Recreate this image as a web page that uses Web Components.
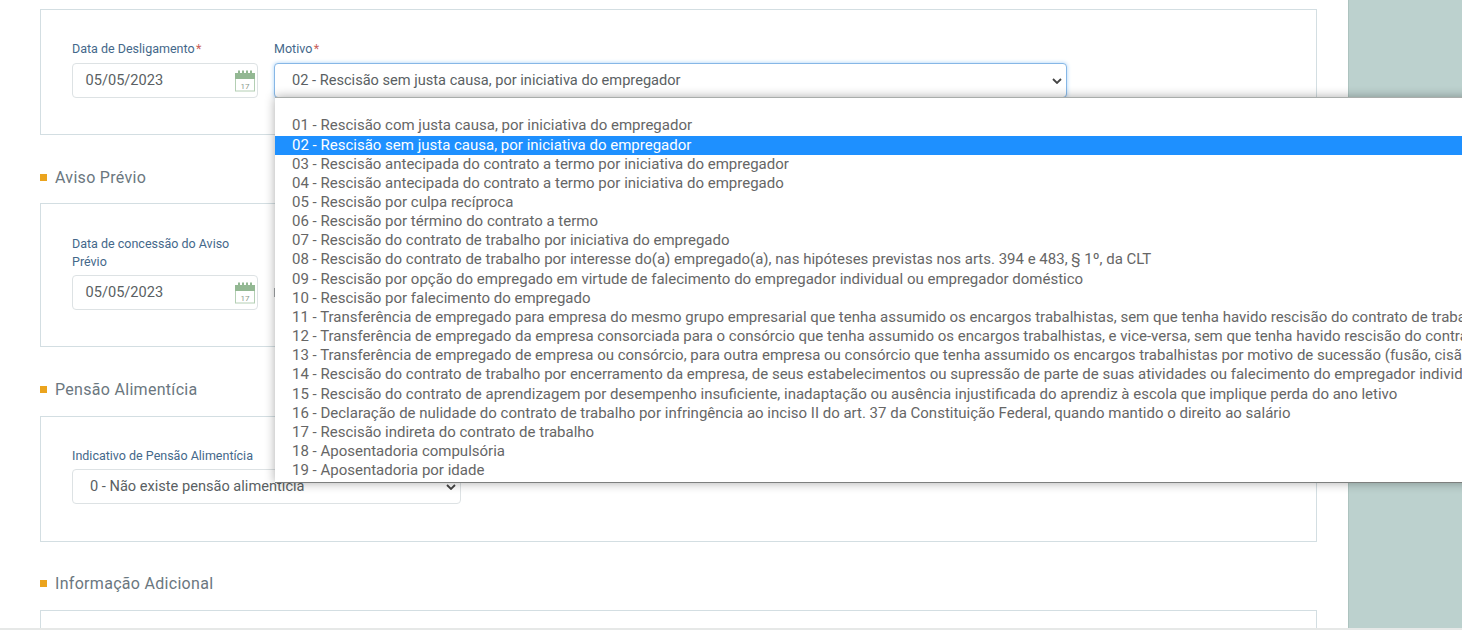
<!DOCTYPE html>
<html lang="pt-BR">
<head>
<meta charset="utf-8">
<title>Desligamento</title>
<style>
  html, body { margin: 0; height: 100%; background: #fff; font-family: Roboto, "Liberation Sans", sans-serif; }
</style>
</head>
<body>
<app-shell>
  <ui-panel>
    <ui-row>
      <ui-field label="Data de Desligamento" required width="186">
        <ui-date value="05/05/2023"></ui-date>
      </ui-field>
      <ui-field label="Motivo" required width="793">
        <ui-select value="02 - Rescisão sem justa causa, por iniciativa do empregador" focused>
          <ui-listbox slot="list">
            <ui-option>01 - Rescisão com justa causa, por iniciativa do empregador</ui-option>
            <ui-option selected>02 - Rescisão sem justa causa, por iniciativa do empregador</ui-option>
            <ui-option>03 - Rescisão antecipada do contrato a termo por iniciativa do empregador</ui-option>
            <ui-option>04 - Rescisão antecipada do contrato a termo por iniciativa do empregado</ui-option>
            <ui-option>05 - Rescisão por culpa recíproca</ui-option>
            <ui-option>06 - Rescisão por término do contrato a termo</ui-option>
            <ui-option>07 - Rescisão do contrato de trabalho por iniciativa do empregado</ui-option>
            <ui-option>08 - Rescisão do contrato de trabalho por interesse do(a) empregado(a), nas hipóteses previstas nos arts. 394 e 483, § 1º, da CLT</ui-option>
            <ui-option>09 - Rescisão por opção do empregado em virtude de falecimento do empregador individual ou empregador doméstico</ui-option>
            <ui-option>10 - Rescisão por falecimento do empregado</ui-option>
            <ui-option>11 - Transferência de empregado para empresa do mesmo grupo empresarial que tenha assumido os encargos trabalhistas, sem que tenha havido rescisão do contrato de trabalho</ui-option>
            <ui-option>12 - Transferência de empregado da empresa consorciada para o consórcio que tenha assumido os encargos trabalhistas, e vice-versa, sem que tenha havido rescisão do contrato de trabalho</ui-option>
            <ui-option>13 - Transferência de empregado de empresa ou consórcio, para outra empresa ou consórcio que tenha assumido os encargos trabalhistas por motivo de sucessão (fusão, cisão ou incorporação)</ui-option>
            <ui-option>14 - Rescisão do contrato de trabalho por encerramento da empresa, de seus estabelecimentos ou supressão de parte de suas atividades ou falecimento do empregador individual</ui-option>
            <ui-option>15 - Rescisão do contrato de aprendizagem por desempenho insuficiente, inadaptação ou ausência injustificada do aprendiz à escola que implique perda do ano letivo</ui-option>
            <ui-option>16 - Declaração de nulidade do contrato de trabalho por infringência ao inciso II do art. 37 da Constituição Federal, quando mantido o direito ao salário</ui-option>
            <ui-option>17 - Rescisão indireta do contrato de trabalho</ui-option>
            <ui-option>18 - Aposentadoria compulsória</ui-option>
            <ui-option>19 - Aposentadoria por idade</ui-option>
          </ui-listbox>
        </ui-select>
      </ui-field>
    </ui-row>
    <ui-gap size="36"></ui-gap>
  </ui-panel>

  <ui-heading>Aviso Prévio</ui-heading>
  <ui-panel style="padding-top: 31px; --label-gap: 4px">
    <ui-row>
      <ui-field label="Data de concessão do Aviso Prévio" width="186">
        <ui-date value="05/05/2023"></ui-date>
      </ui-field>
      <ui-sliver></ui-sliver>
    </ui-row>
    <ui-gap size="36"></ui-gap>
  </ui-panel>

  <ui-heading style="margin-bottom: 14px">Pensão Alimentícia</ui-heading>
  <ui-panel style="padding-top: 30px; --label-gap: 4px">
    <ui-row>
      <ui-field label="Indicativo de Pensão Alimentícia" width="389">
        <ui-select value="0 - Não existe pensão alimentícia"></ui-select>
      </ui-field>
    </ui-row>
    <ui-gap size="37"></ui-gap>
  </ui-panel>

  <ui-heading style="margin: 28px 0 14px">Informação Adicional</ui-heading>
  <ui-panel></ui-panel>
</app-shell>

<script>
  class BaseElement extends HTMLElement {
    render(html) {
      this.root = this.attachShadow({ mode: 'open' });
      this.root.innerHTML = html;
    }
  }

  customElements.define('app-shell', class extends BaseElement {
    constructor() {
      super();
      this.render(`
        <style>
          :host { display: grid; grid-template-rows: 628px 2px; height: 630px; overflow: hidden; }
          .top { display: grid; grid-template-columns: 1348px 114px; min-height: 0; }
          main { padding: 9px 31px 0 40px; min-height: 0; }
          aside { background: #bcd1ce; border-left: 1px solid #adc3bf; box-sizing: border-box; }
          .strip { background: #e6e8e7; }
        </style>
        <div class="top">
          <main><slot></slot></main>
          <aside></aside>
        </div>
        <div class="strip"></div>
      `);
    }
  });

  customElements.define('ui-panel', class extends BaseElement {
    constructor() {
      super();
      this.render(`
        <style>
          :host { display: block; box-sizing: border-box; border: 1px solid #d3dee2; padding: 30px 31px 0; min-height: 40px; background: #fff; }
        </style>
        <slot></slot>
      `);
    }
  });

  customElements.define('ui-row', class extends BaseElement {
    constructor() {
      super();
      this.render(`
        <style>
          :host { display: flex; gap: 16px; align-items: flex-end; }
        </style>
        <slot></slot>
      `);
    }
  });

  customElements.define('ui-gap', class extends BaseElement {
    constructor() {
      super();
      this.render(`<style>:host { display: block; height: ${this.getAttribute('size')}px; }</style>`);
    }
  });

  // the edge of a field that the open list covers, only 1px of it shows
  customElements.define('ui-sliver', class extends BaseElement {
    constructor() {
      super();
      this.render(`<style>:host { display: block; width: 1px; height: 9px; margin-bottom: 13px; background: #a4a8ab; flex: none; }</style>`);
    }
  });

  customElements.define('ui-heading', class extends BaseElement {
    constructor() {
      super();
      this.render(`
        <style>
          :host { display: flex; align-items: center; gap: 8px; height: 26px; margin: 29px 0 13px; color: #6b7780; font-size: 16px; letter-spacing: .3px; }
          i { width: 7px; height: 7px; background: #eba41e; flex: none; }
        </style>
        <i></i><span><slot></slot></span>
      `);
    }
  });

  customElements.define('ui-field', class extends BaseElement {
    constructor() {
      super();
      const required = this.hasAttribute('required') ? '<b>*</b>' : '';
      this.render(`
        <style>
          :host { display: block; width: ${this.getAttribute('width')}px; flex: none; }
          label { display: block; color: #44688a; font-size: 12.5px; line-height: 18px; margin-bottom: var(--label-gap, 5px); }
          b { color: #c9605a; font-weight: 400; margin-left: 1.5px; }
        </style>
        <label>${this.getAttribute('label')}${required}</label>
        <slot></slot>
      `);
    }
  });

  customElements.define('ui-date', class extends BaseElement {
    constructor() {
      super();
      this.render(`
        <style>
          :host { display: flex; align-items: center; justify-content: space-between; box-sizing: border-box; height: 35px; padding: 0 1px 0 12.5px; border: 1px solid #dde2e4; border-radius: 4px; color: #5a5f63; font-size: 14.6px; background: #fff; }
          span { padding-bottom: 1px; }
          svg { display: block; }
        </style>
        <span>${this.getAttribute('value')}</span>
        <svg width="22" height="22" viewBox="0 0 22 22" aria-hidden="true">
          <rect x="1.5" y="4.5" width="19" height="16.5" fill="#fff" stroke="#b4cfb4"/>
          <rect x="1" y="3" width="20" height="6" fill="#93b893"/>
          <path d="M5 .5v3M9 .5v3M13 .5v3M17 .5v3" stroke="#93b893" stroke-width="2"/>
          <text x="11" y="18.5" font-family="Roboto, sans-serif" font-size="8" fill="#8b9a8b" text-anchor="middle">17</text>
        </svg>
      `);
    }
  });

  customElements.define('ui-select', class extends BaseElement {
    constructor() {
      super();
      const focused = this.hasAttribute('focused');
      this.render(`
        <style>
          :host { display: block; position: relative; }
          .box { display: flex; align-items: center; justify-content: space-between; box-sizing: border-box; height: 35px; padding: 0 4px 0 17px; border: 1px solid ${focused ? '#86b7e6' : '#dde2e4'}; border-radius: 4px; color: #5a5f63; font-size: 14.6px; background: #fff; ${focused ? 'box-shadow: 0 0 4px #a9d2f7;' : ''} }
          span { padding-bottom: 1px; }
          svg { display: block; flex: none; }
        </style>
        <div class="box">
          <span>${this.getAttribute('value')}</span>
          <svg width="10" height="6" viewBox="0 0 10 6" aria-hidden="true"><path d="M1 1l4 4 4-4" fill="none" stroke="#444" stroke-width="1.8"/></svg>
        </div>
        <slot name="list"></slot>
      `);
    }
  });

  customElements.define('ui-listbox', class extends BaseElement {
    constructor() {
      super();
      this.render(`
        <style>
          :host { display: block; position: absolute; top: 34px; left: 1px; width: 1300px; height: 386px; box-sizing: border-box; padding-top: 18.4px; background: #fff; border-top: 1px solid #a9adab; border-bottom: 1px solid #7d7f7e; box-shadow: 0 0 10px rgba(0,0,0,.33); overflow: hidden; z-index: 5; }
        </style>
        <slot></slot>
      `);
    }
  });

  customElements.define('ui-option', class extends BaseElement {
    constructor() {
      super();
      const selected = this.hasAttribute('selected');
      this.render(`
        <style>
          :host { display: block; height: 19.17px; line-height: 19.17px; padding-left: 17px; white-space: nowrap; font-size: 15px; color: ${selected ? '#fff' : '#666'}; background: ${selected ? '#1e90ff' : 'transparent'}; }
        </style>
        <slot></slot>
      `);
    }
  });
</script>
</body>
</html>
